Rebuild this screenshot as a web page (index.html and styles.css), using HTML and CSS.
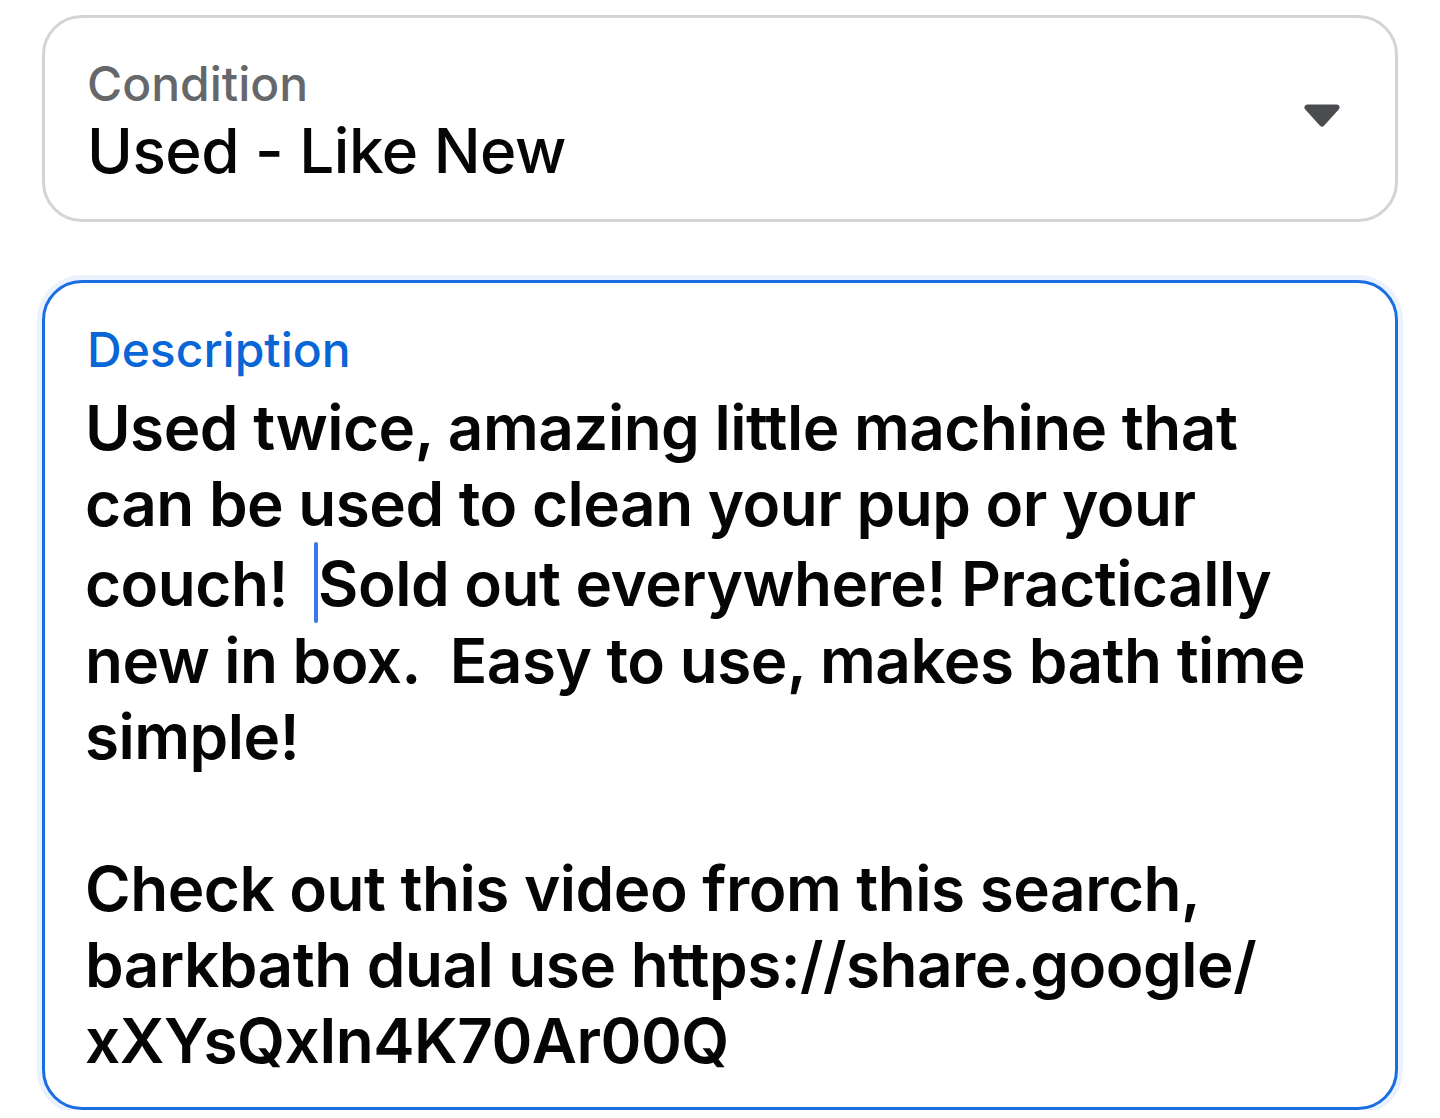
FILE: index.html
```html
<!DOCTYPE html>
<html lang="en">
<head>
    <meta charset="UTF-8">
    <meta name="viewport" content="width=device-width, initial-scale=1.0">
    <title>Listing details</title>
    <link rel="stylesheet" href="styles.css">
</head>
<body>
    <div class="form">
        <div class="field select-field">
            <div class="field-text">
                <div class="label">Condition</div>
                <div class="value">Used - Like New</div>
            </div>
            <svg class="caret" width="36" height="23" viewBox="0 0 36 23">
                <polygon points="3.5,3.5 32.5,3.5 18,19.5" fill="#4b4c4f" stroke="#4b4c4f" stroke-width="6" stroke-linejoin="round"/>
            </svg>
        </div>

        <div class="field text-field focused">
            <div class="label">Description</div>
            <div class="value description">Used twice, amazing little machine that can be used to clean your pup or your couch!  <span class="cursor"></span>Sold out everywhere! Practically new in box.  Easy to use, makes bath time simple!

Check out this video from this search, barkbath dual use https://share.google/ xXYsQxIn4K70Ar00Q</div>
        </div>
    </div>
</body>
</html>
```

FILE: styles.css
```css
body {
    margin: 0;
    background: #fff;
    font-family: 'Inter', 'Liberation Sans', sans-serif;
    color: #050505;
}
.form {
    padding: 15px 42px 0;
}
.field {
    border: 3px solid #d2d4d7;
    border-radius: 40px;
    padding: 37px 42px 30px 42px;
    background: #fff;
}
.select-field {
    display: flex;
    align-items: center;
    justify-content: space-between;
    padding-right: 55px;
}
.caret {
    display: block;
    margin-top: -14px;
}
.label {
    font-size: 48px;
    line-height: 58px;
    color: #65676b;
    font-weight: 500;
}
.value {
    font-size: 62px;
    line-height: 76px;
    font-weight: 500;
    letter-spacing: -0.5px;
}
.text-field {
    margin-top: 58px;
    padding-top: 38px;
    padding-right: 70px;
    padding-bottom: 28px;
}
.focused {
    border-color: #1a6ee0;
    box-shadow: 0 0 0 5px #eaf2fd;
}
.focused .label {
    color: #0866d6;
}
.description {
    margin-top: 11px;
    margin-left: -2px;
    font-weight: 600;
    letter-spacing: -0.5px;
    white-space: pre-wrap;
    overflow-wrap: break-word;
}
.cursor {
    display: inline-block;
    width: 4px;
    height: 81px;
    border-radius: 2px;
    background: #3a78ee;
    vertical-align: -17px;
    margin-left: -4px;
}
```
